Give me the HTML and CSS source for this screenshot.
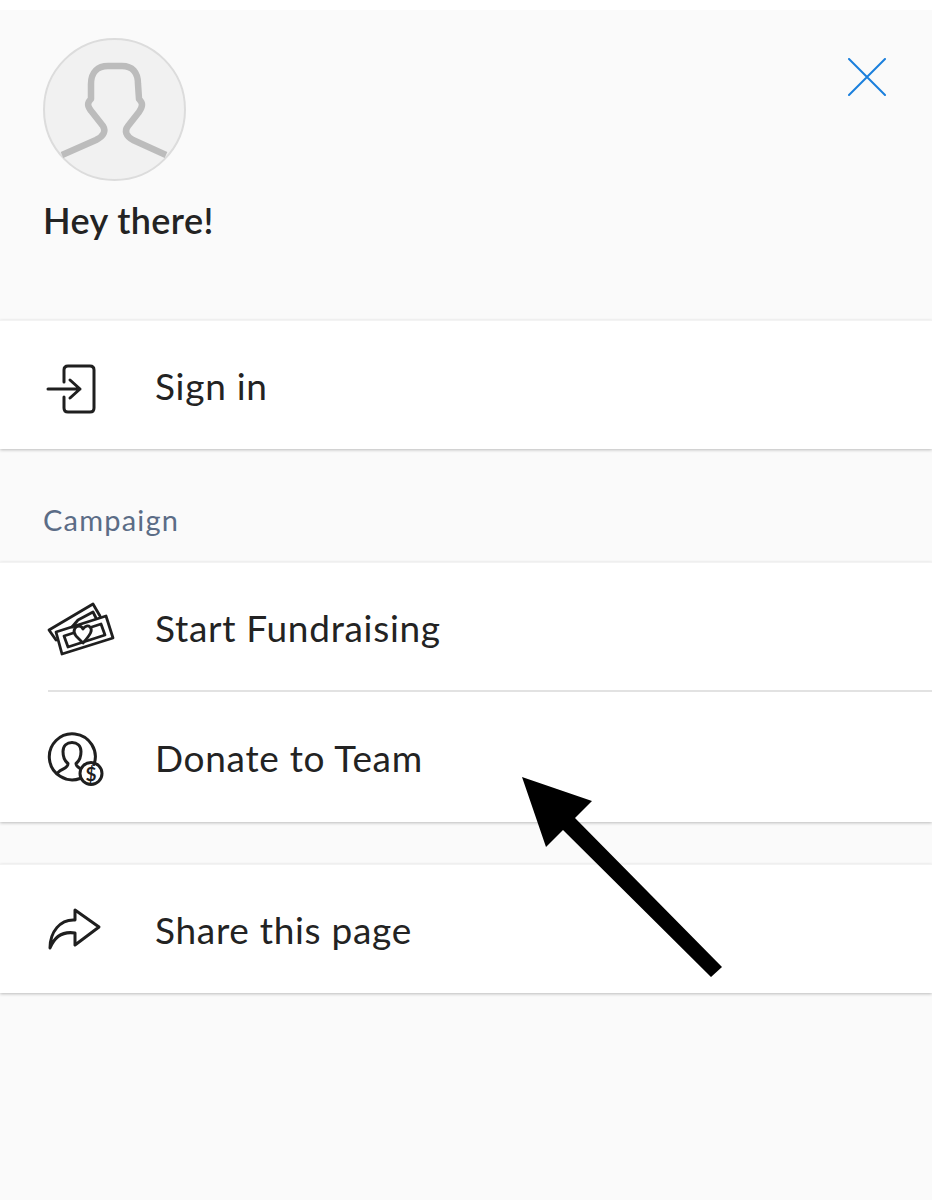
FILE: index.html
```html
<!DOCTYPE html>
<html lang="en">
<head>
<meta charset="utf-8">
<title>Menu</title>
<link rel="stylesheet" href="styles.css">
</head>
<body>
<div class="page">
  <header class="profile">
    <div class="profile-top">
      <svg class="avatar" viewBox="43 38 143 143" aria-hidden="true">
        <circle cx="114.5" cy="109.5" r="70.5" class="avatar-disc"/>
        <path class="avatar-person" d="M62 155 L96 140 C104 136 106 131 103 126 L92 112 C87 106 87 103 91 99 L91 84 C91 72 98 66 108 66 L122 66 C132 66 138 72 138 84 L139 99 C143 103 143 106 139 112 L128 126 C124 131 126 136 133 140 L166 155"/>
      </svg>
      <svg class="close" viewBox="0 0 38 38" aria-hidden="true">
        <path d="M1 1 L37 37 M37 1 L1 37"/>
      </svg>
    </div>
    <div class="greeting">Hey there!</div>
  </header>

  <section class="group">
    <div class="row">
      <svg class="icon" viewBox="44 0 72 60" aria-hidden="true">
        <g transform="translate(0 -355)">
          <path d="M64 382 V370 Q64 366 68 366 H90 Q94 366 94 370 V408 Q94 412 90 412 H68 Q64 412 64 408 V397"/>
          <path d="M48 389 H80 M70 380 L80 389 L70 398"/>
        </g>
      </svg>
      <span class="label">Sign in</span>
    </div>
  </section>

  <div class="section-title">Campaign</div>

  <section class="group">
    <div class="row">
      <svg class="icon thin" viewBox="44 0 72 60" aria-hidden="true">
        <g transform="translate(0 -597)">
          <path d="M56 632 L106 616 L113 638 L62 654 Z"/>
          <path d="M64 636 L101 624 L105 635 L68 647 Z"/>
          <path d="M56 640 L49 630 L93 604 L100 616"/>
          <path d="M72 627 L78 620 L93 612 L96 618"/>
          <path class="heart" d="M83 643 L76 636 C72 631 75 626 79 626 C81 626 82 627 83 629 C85 626 88 625 90 627 C93 630 91 634 83 643 Z"/>
        </g>
      </svg>
      <span class="label">Start Fundraising</span>
    </div>
    <div class="row divided">
      <svg class="icon" viewBox="44 0 72 60" aria-hidden="true">
        <g transform="translate(0 -726.5)">
          <path d="M80 778 A23 23 0 1 1 94 764"/>
          <path d="M58 772 C62 768 68 768 68 763 C64 760 63 755 63 751 C63 745 67 742 72 742 C77 742 81 745 81 751 C81 755 80 760 76 763 C76 765 77 766 80 768"/>
          <circle cx="91" cy="773" r="11"/>
          <text class="dollar" x="91" y="780">$</text>
        </g>
      </svg>
      <span class="label">Donate to Team</span>
    </div>
  </section>

  <section class="group share">
    <div class="row">
      <svg class="icon" viewBox="44 0 72 60" aria-hidden="true">
        <g transform="translate(0 -899)">
          <path d="M75 910 L99 927 L75 945 V933 C62 931 54 938 50 948 C50 932 60 919 75 920 Z"/>
        </g>
      </svg>
      <span class="label">Share this page</span>
    </div>
  </section>

  <svg class="pointer" viewBox="0 0 932 1200" aria-hidden="true">
    <path d="M522 777 L592 801 L575 818 L722 967 L711 977 L563 830 L546 847 Z"/>
  </svg>
</div>
</body>
</html>
```
FILE: styles.css
```css
* { box-sizing: border-box; }

html, body {
  margin: 0;
  background: #fff;
}

body {
  font-family: "Lato", "Noto Sans", sans-serif;
  color: #232323;
}

.page {
  position: relative;
  width: 932px;
  height: 1200px;
  padding-top: 10px;
  overflow: hidden;
}

.page::before {
  content: "";
  position: absolute;
  inset: 10px 0 0 0;
  background: #fafafa;
}

.profile,
.group,
.section-title {
  position: relative;
}

.profile {
  height: 310px;
  padding: 28px 46px 0 43px;
}

.profile-top {
  display: flex;
  justify-content: space-between;
  align-items: flex-start;
}

.avatar {
  width: 143px;
  height: 143px;
}

.avatar-disc {
  fill: #f1f1f1;
  stroke: #dcdcdc;
  stroke-width: 2;
}

.avatar-person {
  fill: none;
  stroke: #bcbcbc;
  stroke-width: 6.5;
  stroke-linejoin: round;
}

.close {
  width: 38px;
  height: 38px;
  margin-top: 20px;
}

.close path {
  fill: none;
  stroke: #1a7fdc;
  stroke-width: 2;
  stroke-linecap: round;
}

.greeting {
  margin-top: 17px;
  font-size: 36px;
  line-height: 44px;
  font-weight: 600;
  letter-spacing: 0.4px;
}

.group {
  background: #fff;
  border-top: 1px solid #f3f3f3;
  box-shadow: 0 1px 3px rgba(0, 0, 0, 0.25);
}

.share {
  margin-top: 42px;
}

.row {
  display: flex;
  align-items: center;
  height: 128px;
  padding-left: 44px;
}

.row.divided {
  position: relative;
  height: 131px;
}

.row.divided::before {
  content: "";
  position: absolute;
  top: -1px;
  left: 48px;
  right: 0;
  height: 2px;
  background: #e2e2e2;
}

.icon {
  flex: none;
  width: 72px;
  height: 60px;
  margin-right: 39px;
  overflow: visible;
}

.icon path,
.icon circle {
  fill: none;
  stroke: #1f1f1f;
  stroke-width: 3;
  stroke-linecap: round;
  stroke-linejoin: round;
}

.icon.thin path {
  stroke-width: 2.8;
}

.icon .heart {
  fill: #fff;
}

.dollar {
  font-size: 19px;
  font-weight: 700;
  text-anchor: middle;
  fill: #1f1f1f;
}

.label {
  padding-top: 2px;
  font-size: 37px;
  line-height: 44px;
  letter-spacing: 0.7px;
}

.section-title {
  height: 113px;
  padding: 53px 0 0 43px;
  font-size: 29px;
  line-height: 36px;
  letter-spacing: 1.2px;
  color: #5b6c86;
}

.pointer {
  position: absolute;
  inset: 0;
  width: 932px;
  height: 1200px;
}

.pointer path {
  fill: #000;
}
```
